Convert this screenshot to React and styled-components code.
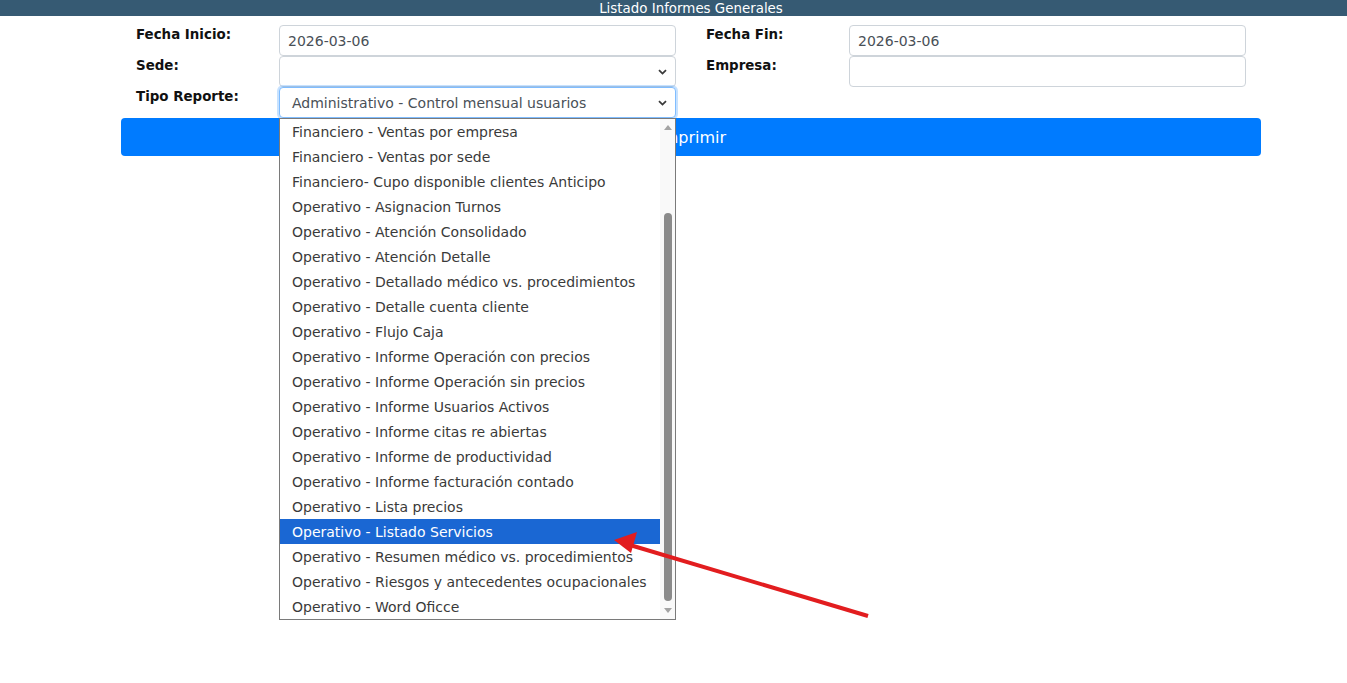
import React from 'react';
import styled, { createGlobalStyle } from 'styled-components';

const GlobalStyle = createGlobalStyle`
  html, body {
    margin: 0;
    padding: 0;
    background: #fff;
  }
  body {
    font-family: "DejaVu Sans", Verdana, sans-serif;
    position: relative;
    min-height: 683px;
  }
`;

const TitleBar = styled.div`
  height: 16px;
  line-height: 17px;
  background: #365a73;
  color: #fff;
  text-align: center;
  font-family: "DejaVu Sans", sans-serif;
  font-size: 13.4px;
  padding-left: 35px;
`;

const Container = styled.div`
  width: 1140px;
  margin: 9px 0 0 121px;
`;

const FormGrid = styled.div`
  display: grid;
  grid-template-columns: 143px 397px 173px 397px;
  padding: 0 15px;
`;

const Label = styled.label`
  font-family: "DejaVu Sans", sans-serif;
  font-weight: bold;
  font-size: 13.4px;
  color: #111;
  padding-top: 2px;
  padding-left: ${(p) => (p.$right ? '30px' : '0')};
  line-height: 16px;
`;

const Field = styled.div`
  position: relative;
  height: 31px;
`;

const Input = styled.div`
  box-sizing: border-box;
  height: 31px;
  border: 1px solid ${(p) => (p.$focus ? '#80bdff' : '#ced4da')};
  border-radius: 4px;
  box-shadow: ${(p) => (p.$focus ? '0 0 0 2px rgba(0,123,255,0.22)' : 'none')};
  padding: 0 8px 0 8px;
  display: flex;
  align-items: center;
  justify-content: space-between;
  font-size: 14px;
  color: #495057;
  background: #fff;
  white-space: nowrap;
`;

const SelectText = styled.span`
  padding-left: ${(p) => (p.$select ? '4px' : '0')};
`;

const Chevron = () => (
  <svg width="9" height="6" viewBox="0 0 9 6">
    <path d="M1 1.2 L4.5 4.6 L8 1.2" fill="none" stroke="#3a3a3a" strokeWidth="1.8" />
  </svg>
);

const PrintButton = styled.button`
  display: block;
  width: 100%;
  height: 38px;
  margin-top: 0;
  border: none;
  border-radius: 4px;
  background: #007bff;
  color: #fff;
  font-family: "DejaVu Sans", sans-serif;
  font-size: 16px;
  padding: 0 0 0 2px;
`;

const DropList = styled.div`
  position: absolute;
  top: 31px;
  left: 0;
  width: 397px;
  height: 502px;
  box-sizing: border-box;
  border: 1px solid #7a7a7a;
  background: #fff;
  display: flex;
  z-index: 5;
`;

const Options = styled.ul`
  list-style: none;
  margin: 0;
  padding: 0;
  flex: 1;
`;

const Option = styled.li`
  height: 25px;
  line-height: 27px;
  padding-left: 12px;
  font-size: 14px;
  color: ${(p) => (p.$active ? '#fff' : '#3a3a3a')};
  background: ${(p) => (p.$active ? '#1a67d3' : 'transparent')};
  white-space: nowrap;
  overflow: hidden;
`;

const ScrollTrack = styled.div`
  width: 15px;
  display: flex;
  flex-direction: column;
  align-items: center;
  background: #f9f9f9;
`;

const ScrollArrow = styled.div`
  height: 16px;
  display: flex;
  align-items: center;
  justify-content: center;
`;

const ScrollSpace = styled.div`
  flex: 1;
  width: 100%;
  display: flex;
  flex-direction: column;
  align-items: center;
`;

const Thumb = styled.div`
  width: 8px;
  border-radius: 4px;
  background: #8b8b8b;
`;

const Annotation = styled.svg`
  position: absolute;
  left: 0;
  top: 0;
  pointer-events: none;
  z-index: 10;
`;

const options = [
  'Financiero - Ventas por empresa',
  'Financiero - Ventas por sede',
  'Financiero- Cupo disponible clientes Anticipo',
  'Operativo - Asignacion Turnos',
  'Operativo - Atención Consolidado',
  'Operativo - Atención Detalle',
  'Operativo - Detallado médico vs. procedimientos',
  'Operativo - Detalle cuenta cliente',
  'Operativo - Flujo Caja',
  'Operativo - Informe Operación con precios',
  'Operativo - Informe Operación sin precios',
  'Operativo - Informe Usuarios Activos',
  'Operativo - Informe citas re abiertas',
  'Operativo - Informe de productividad',
  'Operativo - Informe facturación contado',
  'Operativo - Lista precios',
  'Operativo - Listado Servicios',
  'Operativo - Resumen médico vs. procedimientos',
  'Operativo - Riesgos y antecedentes ocupacionales',
  'Operativo - Word Oficce',
];

export default function App() {
  return (
    <>
      <GlobalStyle />
      <TitleBar>Listado Informes Generales</TitleBar>
      <Container>
        <FormGrid>
          <Label>Fecha Inicio:</Label>
          <Field>
            <Input>2026-03-06</Input>
          </Field>
          <Label $right>Fecha Fin:</Label>
          <Field>
            <Input>2026-03-06</Input>
          </Field>

          <Label>Sede:</Label>
          <Field>
            <Input>
              <SelectText $select />
              <Chevron />
            </Input>
          </Field>
          <Label $right>Empresa:</Label>
          <Field>
            <Input />
          </Field>

          <Label>Tipo Reporte:</Label>
          <Field>
            <Input $focus>
              <SelectText $select>Administrativo - Control mensual usuarios</SelectText>
              <Chevron />
            </Input>
            <DropList>
              <Options>
                {options.map((o) => (
                  <Option key={o} $active={o === 'Operativo - Listado Servicios'}>
                    {o}
                  </Option>
                ))}
              </Options>
              <ScrollTrack>
                <ScrollArrow>
                  <svg width="8" height="6" viewBox="0 0 8 6">
                    <path d="M0 6 L4 1 L8 6 Z" fill="#a3a3a3" />
                  </svg>
                </ScrollArrow>
                <ScrollSpace>
                  <Thumb style={{ marginTop: 78, height: 388 }} />
                </ScrollSpace>
                <ScrollArrow>
                  <svg width="8" height="6" viewBox="0 0 8 6">
                    <path d="M0 0 L4 5 L8 0 Z" fill="#a3a3a3" />
                  </svg>
                </ScrollArrow>
              </ScrollTrack>
            </DropList>
          </Field>
          <div />
          <div />
        </FormGrid>
        <PrintButton>Imprimir</PrintButton>
      </Container>
      <Annotation width="1347" height="683" viewBox="0 0 1347 683">
        <line x1="868" y1="616" x2="630" y2="545" stroke="#e21d1f" strokeWidth="4" />
        <path d="M614 540 L637 532 L631 553 Z" fill="#e21d1f" />
      </Annotation>
    </>
  );
}
